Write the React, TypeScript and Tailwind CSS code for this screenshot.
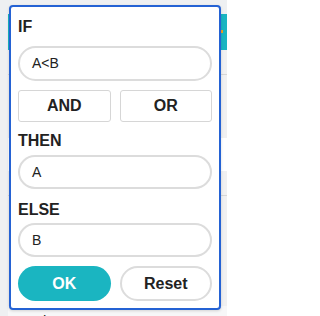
import React from "react";

function Field({ value }: { value: string }) {
  return (
    <div className="flex h-[34px] items-center rounded-full border-2 border-[#dcdcdc] bg-white pl-[12px] text-[14px] text-[#222]">
      {value}
    </div>
  );
}

export default function App() {
  return (
    <div
      className="relative h-[316px] w-[227px] overflow-hidden bg-[#eef0f2]"
      style={{ fontFamily: '"Liberation Sans", Arial, sans-serif' }}
    >
      {/* background table */}
      <div className="ml-[8px] mt-[14px] flex flex-col">
        <div className="relative h-[36px] bg-[#1ab5c1]">
          <span className="absolute left-[213px] top-[16px] h-[3px] w-[2px] bg-[#f0a020]" />
        </div>
        <div className="h-[25px] border-b border-[#d6d6d6] bg-[#f0f0f1]" />
        <div className="h-[63px] bg-[#f0f0f1]" />
        <div className="h-[33px] bg-white" />
        <div className="h-[25px] border-b border-[#d6d6d6] bg-[#f0f0f1]" />
        <div className="h-[110px] bg-[#f0f0f1]" />
        <div className="h-[30px] bg-[#f7f7f8] pl-[25px] pt-[4px] text-[15px] text-[#222]">
          Blum
        </div>
      </div>

      {/* popup */}
      <div className="absolute left-[9px] top-[5px] w-[212px] rounded-[4px] border-2 border-[#2462d4] bg-white px-[7px] pb-[7px] pt-[10px] shadow-[0_1px_3px_rgba(0,0,0,0.15)]">
        <div className="h-[20px] text-[16px] font-bold leading-[20px] text-[#222]">IF</div>
        <div className="mt-[9px] flex h-[35px] items-center rounded-full border-2 border-[#dcdcdc] bg-white pl-[12px] text-[14px] text-[#222]">
          A&lt;B
        </div>
        <div className="mt-[9px] grid grid-cols-2 gap-[9px]">
          <button className="flex h-[32px] items-center justify-center rounded-[3px] border border-[#d6d6d6] bg-white text-[16px] font-bold text-[#222]">
            AND
          </button>
          <button className="flex h-[32px] items-center justify-center rounded-[3px] border border-[#d6d6d6] bg-white text-[16px] font-bold text-[#222]">
            OR
          </button>
        </div>
        <div className="mt-[9px] h-[20px] text-[16px] font-bold leading-[20px] text-[#222]">THEN</div>
        <div className="mt-[4px]">
          <Field value="A" />
        </div>
        <div className="mt-[11px] h-[20px] text-[16px] font-bold leading-[20px] text-[#222]">ELSE</div>
        <div className="mt-[3px]">
          <Field value="B" />
        </div>
        <div className="mt-[9px] grid grid-cols-2 gap-[9px]">
          <button className="flex h-[35px] items-center justify-center rounded-full bg-[#1ab5c1] text-[16px] font-bold text-white">
            OK
          </button>
          <button className="flex h-[35px] items-center justify-center rounded-full border-2 border-[#dcdcdc] bg-white text-[16px] font-bold text-[#222]">
            Reset
          </button>
        </div>
      </div>
    </div>
  );
}
